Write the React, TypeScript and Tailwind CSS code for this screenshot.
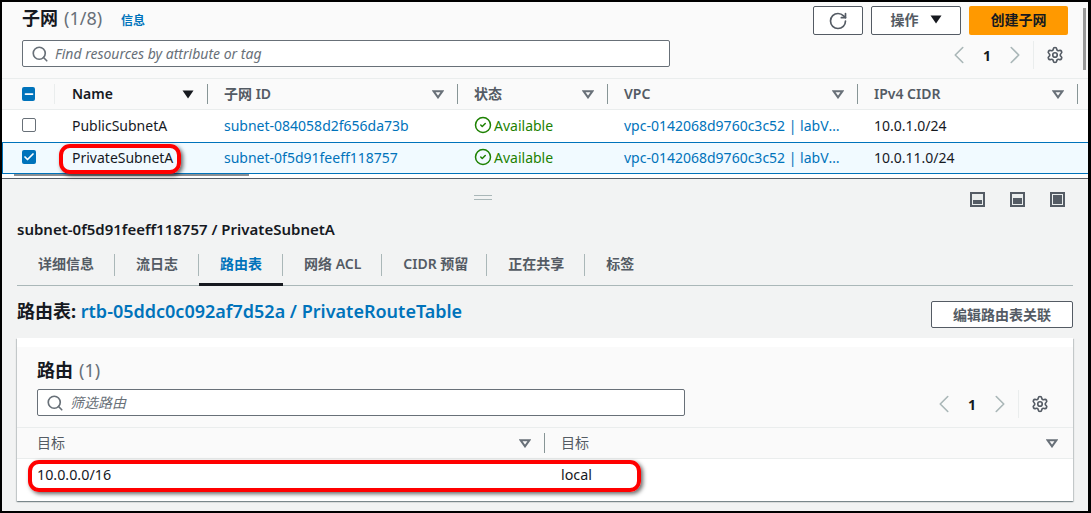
import { ChevronLeft, ChevronRight, CircleCheck, RotateCw, Search, Settings, Check, Minus } from 'lucide-react';

const cols = 'grid grid-cols-[53px_153px_250px_150px_250px_1fr]';

function Caret({ dark }: { dark?: boolean }) {
  return (
    <svg width="12" height="9" viewBox="0 0 12 9" className="shrink-0">
      {dark ? (
        <path d="M0.5 0.5H11.5L6 8.5Z" fill="#16191f" />
      ) : (
        <path d="M1.5 1.2H10.5L6 7.4Z" fill="none" stroke="#687078" strokeWidth="2" />
      )}
    </svg>
  );
}

function HeadCell({ label, dark, last, left = 'pl-[16px]' }: { label: string; dark?: boolean; last?: boolean; left?: string }) {
  return (
    <div className={`flex items-center ${left} ${last ? 'pr-[10px]' : ''}`}>
      <span className={`flex-1 pb-[2px] text-[14px] font-semibold ${dark ? 'text-[#16191f]' : 'text-[#545b64]'}`}>{label}</span>
      <Caret dark={dark} />
      <span className="ml-[13px] h-[20px] w-px bg-[#879596]" />
    </div>
  );
}

function Pager() {
  return (
    <div className="flex items-center">
      <ChevronLeft size={30} strokeWidth={1.3} className="-mx-[3px] text-[#aab7b8]" />
      <span className="w-[32px] text-center text-[14px] font-bold text-[#16191f]">1</span>
      <ChevronRight size={30} strokeWidth={1.3} className="-mx-[3px] text-[#aab7b8]" />
      <span className="ml-[6px] h-[28px] w-px bg-[#eaeded]" />
      <Settings size={18} strokeWidth={2.2} className="ml-[12px] text-[#545b64]" />
    </div>
  );
}

function SearchBox({ text, width }: { text: string; width: string }) {
  return (
    <div className={`flex h-[27px] items-center gap-[6px] rounded-[2px] border border-[#687078] bg-white pl-[8px] ${width}`}>
      <Search size={18} strokeWidth={2.2} className="text-[#687078]" />
      <span className="text-[14px] italic text-[#687078]">{text}</span>
    </div>
  );
}

function Row({ name, id, cidr, selected }: { name: string; id: string; cidr: string; selected?: boolean }) {
  return (
    <div className={`${cols} h-[32px] items-center pb-[2px] text-[14px] ${selected ? 'border-y border-[#0073bb] bg-[#f1faff] shadow-[inset_1px_0_0_#0073bb]' : 'bg-white'}`}>
      <div className="pl-[20px]">
        {selected ? (
          <span className="flex h-[14px] w-[14px] items-center justify-center rounded-[2px] bg-[#0073bb]">
            <Check size={12} strokeWidth={3.5} className="text-white" />
          </span>
        ) : (
          <span className="block h-[14px] w-[14px] rounded-[2px] border border-[#687078] bg-white" />
        )}
      </div>
      <span className="pl-[17px] text-[#16191f]">{name}</span>
      <span className="pl-[16px] text-[#0073bb]">{id}</span>
      <span className="flex items-center gap-[2px] pl-[16px] text-[#1d8102]">
        <CircleCheck size={18} strokeWidth={2} />
        Available
      </span>
      <span className="truncate pl-[16px] pr-[16px] text-[#0073bb]">vpc-0142068d9760c3c52 | labVPC</span>
      <span className="pl-[16px] text-[#16191f]">{cidr}</span>
    </div>
  );
}

function PanelIcon({ fill }: { fill: number }) {
  return (
    <svg width="15" height="15" viewBox="0 0 15 15">
      <rect x="1" y="1" width="13" height="13" fill="#eaeded" stroke="#545b64" strokeWidth="2" />
      <rect x="3" y={12 - fill} width="9" height={fill} fill="#545b64" />
    </svg>
  );
}

const tabs = ['详细信息', '流日志', '路由表', '网络 ACL', 'CIDR 预留', '正在共享', '标签'];

export default function App() {
  return (
    <div className="relative flex h-[513px] w-[1091px] flex-col overflow-hidden border-y-2 border-l-2 border-r-[3px] border-black bg-white font-['Noto_Sans','Noto_Sans_CJK_SC',sans-serif]">
      {/* 列表 */}
      <div className="bg-[#fafafa]">
        <div className="flex items-start justify-between pl-[20px] pr-[20px] pt-[4px]">
          <div className="-mt-[1px] flex items-baseline">
            <h1 className="text-[18px] font-bold text-[#16191f]">子网</h1>
            <span className="ml-[6px] text-[18px] text-[#687078]">(1/8)</span>
            <span className="ml-[19px] text-[12px] font-bold text-[#0073bb]">信息</span>
          </div>
          <div className="flex gap-[8px]">
            <button className="flex h-[29px] w-[50px] items-center justify-center rounded-[2px] border border-[#545b64] bg-white">
              <RotateCw size={20} strokeWidth={2} className="text-[#545b64]" />
            </button>
            <button className="flex h-[29px] w-[90px] items-center justify-center gap-[11px] rounded-[2px] border border-[#545b64] bg-white pb-[2px] text-[14px] font-bold text-[#545b64]">
              操作
              <Caret dark />
            </button>
            <button className="h-[29px] w-[99px] rounded-[2px] bg-[#ff9900] pb-[2px] text-[14px] font-bold text-[#16191f]">创建子网</button>
          </div>
        </div>
        <div className="mt-[5px] flex h-[38px] items-start justify-between pl-[20px] pr-[24px]">
          <SearchBox text="Find resources by attribute or tag" width="w-[648px]" />
          <Pager />
        </div>
      </div>

      <div className={`${cols} h-[32px] border-y border-[#eaeded] bg-[#fafafa]`}>
        <div className="flex items-center pl-[20px]">
          <span className="flex h-[14px] w-[14px] items-center justify-center rounded-[2px] bg-[#0073bb]">
            <Minus size={12} strokeWidth={3.5} className="text-white" />
          </span>
          <span className="ml-[19px] h-[20px] w-px bg-[#eaeded]" />
        </div>
        <HeadCell label="Name" dark left="pl-[17px]" />
        <HeadCell label="子网 ID" />
        <HeadCell label="状态" />
        <HeadCell label="VPC" />
        <HeadCell label="IPv4 CIDR" last />
      </div>
      <Row name="PublicSubnetA" id="subnet-084058d2f656da73b" cidr="10.0.1.0/24" />
      <Row name="PrivateSubnetA" id="subnet-0f5d91feeff118757" cidr="10.0.11.0/24" selected />
      <div className="h-[4px] bg-white" />

      {/* 详情 */}
      <div className="flex-1 border-t border-[#545b64] bg-[#f2f3f3] px-[15px]">
        <div className="flex h-[40px] items-center">
          <div className="-mt-[4px] ml-[457px] flex h-[5px] w-[18px] flex-col justify-between">
            <span className="h-px bg-[#aab7b8]" />
            <span className="h-px bg-[#aab7b8]" />
          </div>
          <div className="ml-auto mr-[8px] flex gap-[25px]">
            <PanelIcon fill={4} />
            <PanelIcon fill={6} />
            <PanelIcon fill={9} />
          </div>
        </div>
        <h2 className="mt-[1px] text-[15px] font-semibold leading-[18px] text-[#16191f]">subnet-0f5d91feeff118757 / PrivateSubnetA</h2>
        <div className="mt-[13px] flex h-[35px] border-b border-[#aab7b8]">
          {tabs.map((t, i) => (
            <div key={t} className={`h-[35px] pt-[3px] ${i === 2 ? 'border-b-[3px] border-[#16191f]' : ''}`}>
              <div
                className={`flex h-[22px] items-center pb-[4px] pl-[21px] text-[14px] font-semibold ${t === 'CIDR 预留' ? 'pr-[18px]' : 'pr-[20px]'} ${i < tabs.length - 1 ? 'border-r border-[#aab7b8]' : ''} ${i === 2 ? 'text-[#0073bb]' : 'text-[#545b64]'}`}
              >
                {t}
              </div>
            </div>
          ))}
        </div>
        <div className="mt-[15px] flex h-[27px] items-center justify-between">
          <p className="mb-[6px] text-[18px] font-bold text-[#16191f]">
            路由表: <span className="font-semibold text-[#0073bb]">rtb-05ddc0c092af7d52a / PrivateRouteTable</span>
          </p>
          <button className="h-[27px] w-[142px] rounded-[2px] border border-[#545b64] bg-white text-[14px] font-bold text-[#545b64]">编辑路由表关联</button>
        </div>

        <div className="mt-[10px] h-[163px] bg-white pt-[9px] shadow-[0_1px_1px_0_rgba(0,28,36,0.3),1px_1px_1px_0_rgba(0,28,36,0.15),-1px_1px_1px_0_rgba(0,28,36,0.15)]">
          <div className="bg-[#fafafa] px-[20px] pt-[10px]">
            <div className="flex h-[24px] items-baseline">
              <h3 className="text-[18px] font-bold text-[#16191f]">路由</h3>
              <span className="ml-[6px] text-[18px] text-[#687078]">(1)</span>
            </div>
            <div className="mt-[8px] flex h-[38px] items-start justify-between pr-[4px]">
              <SearchBox text="筛选路由" width="w-[648px]" />
              <Pager />
            </div>
          </div>
          <div className="grid h-[32px] grid-cols-[528px_1fr] border-y border-[#eaeded] bg-[#fafafa]">
            <div className="flex items-center pl-[20px]">
              <span className="flex-1 pb-[2px] text-[14px] text-[#545b64]">目标</span>
              <Caret />
              <span className="ml-[13px] h-[20px] w-px bg-[#879596]" />
            </div>
            <div className="flex items-center pl-[16px] pr-[15px]">
              <span className="flex-1 pb-[2px] text-[14px] text-[#545b64]">目标</span>
              <Caret />
            </div>
          </div>
          <div className="grid h-[32px] grid-cols-[528px_1fr] items-center text-[14.3px] text-[#16191f]">
            <span className="pl-[20px]">10.0.0.0/16</span>
            <span className="pl-[16px]">local</span>
          </div>
        </div>
      </div>

      {/* 标注 */}
      <div className="absolute left-[12px] top-[172px] h-[2px] w-[235px] bg-[#8a8f94]" />
      <div className="absolute right-[2px] top-[6px] h-[62px] w-[3px] bg-[#9a9a9a]" />
      <div className="absolute left-[57px] top-[142px] h-[30px] w-[122px] rounded-[11px] border-[4px] border-[#ff0000] shadow-[2px_2px_4px_rgba(0,0,0,0.6)]" />
      <div className="absolute left-[26px] top-[458px] h-[32px] w-[613px] rounded-[11px] border-[4px] border-[#ff0000] shadow-[2px_2px_4px_rgba(0,0,0,0.6)]" />
    </div>
  );
}
